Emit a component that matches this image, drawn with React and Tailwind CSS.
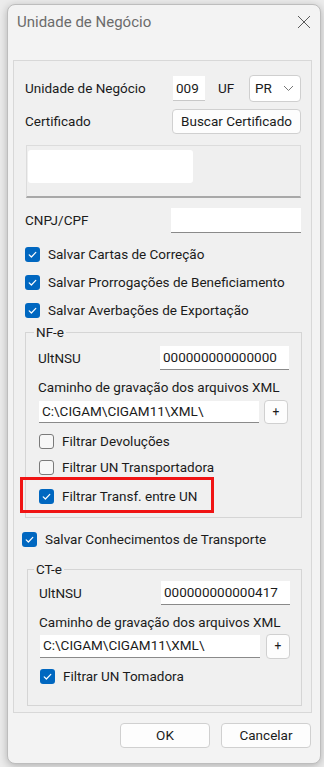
import React from 'react'

const font = { fontFamily: 'Roboto, "Liberation Sans", sans-serif' }

function Check({ checked }) {
  if (checked) {
    return (
      <span className="flex h-[15px] w-[15px] shrink-0 items-center justify-center rounded-[3px] bg-[#0067c0]">
        <svg width="11" height="11" viewBox="0 0 11 11" fill="none">
          <path d="M2.2 5.8 L4.4 8 L8.8 3.4" stroke="white" strokeWidth="1.2" strokeLinecap="round" strokeLinejoin="round" />
        </svg>
      </span>
    )
  }
  return <span className="h-[15px] w-[15px] shrink-0 rounded-[3px] border border-[#7a7a7a] bg-[#f7f7f7]" />
}

function CheckRow({ checked, label, className = '' }) {
  return (
    <div className={`flex h-[26px] items-center gap-[8px] ${className}`}>
      <Check checked={checked} />
      <span>{label}</span>
    </div>
  )
}

function TextBox({ value = '', className = '' }) {
  return (
    <div className={`flex items-center border-b border-[#8a8a8a] bg-white pl-[3px] ${className}`}>
      {value}
    </div>
  )
}

function Btn({ children, className = '' }) {
  return (
    <div className={`flex items-center justify-center rounded-[4px] border border-[#d0d0d0] bg-[#fdfdfd] ${className}`}>
      {children}
    </div>
  )
}

function Legend({ children, className = '' }) {
  return <legend className={`px-[2px] leading-[16px] ${className}`}>{children}</legend>
}

export default function App() {
  return (
    <div className="min-h-screen bg-[#ececec] pt-[4px]" style={font}>
      <div className="ml-[7px] flex h-[760px] w-[314px] flex-col rounded-[8px] border border-[#bdbdbd] bg-[#f3f3f3] text-[13.5px] text-[#1b1b1b] shadow-[0_2px_8px_rgba(0,0,0,0.25)]">
        {/* title bar */}
        <div className="flex h-[55px] items-start justify-between">
          <span className="mt-[7px] pl-[9px] text-[15px] leading-[20px] text-[#6b6b6b]">Unidade de Negócio</span>
          <svg className="mr-[9px] mt-[10px]" width="14" height="14" viewBox="0 0 14 14">
            <path d="M1 1 L13 13 M13 1 L1 13" stroke="#5a5a5a" strokeWidth="1" />
          </svg>
        </div>

        {/* main panel */}
        <div className="ml-[5px] mr-[8px] flex h-[653px] flex-col border border-[#d8d8d8] bg-[#f0f0f0] pl-[11px] pr-[10px]">
          <div className="mt-[14px] flex h-[27px] items-center">
            <span className="w-[148px]">Unidade de Negócio</span>
            <TextBox value="009" className="h-[25px] w-[32px] border-b-[#c8c8c8] pl-[1px]" />
            <span className="ml-[13px]">UF</span>
            <div className="ml-auto flex h-[27px] w-[52px] items-center justify-between rounded-[4px] border border-[#cfcfcf] bg-white pl-[5px] pr-[6px]">
              <span>PR</span>
              <svg width="11" height="7" viewBox="0 0 11 7">
                <path d="M1 1 L5.5 5.5 L10 1" stroke="#777" strokeWidth="1" fill="none" />
              </svg>
            </div>
          </div>

          <div className="mt-[7px] flex h-[25px] items-center justify-between">
            <span>Certificado</span>
            <Btn className="h-[25px] w-[129px]">Buscar Certificado</Btn>
          </div>

          <div className="ml-[1px] mt-[11px] h-[53px] w-[275px] border border-b-2 border-[#dcdcdc] border-b-[#a8a8a8] bg-[#efefef] pl-[1px] pt-[4px]">
            <div className="h-[33px] w-[165px] rounded-[3px] bg-white" />
          </div>

          <div className="mt-[10px] flex h-[25px] items-center justify-between">
            <span>CNPJ/CPF</span>
            <TextBox className="h-[25px] w-[130px]" />
          </div>

          <div className="mt-[7px] flex flex-col">
            <CheckRow checked label="Salvar Cartas de Correção" className="h-[28px]" />
            <CheckRow checked label="Salvar Prorrogações de Beneficiamento" className="h-[28px]" />
            <CheckRow checked label="Salvar Averbações de Exportação" className="h-[28px]" />
          </div>

          {/* NF-e */}
          <fieldset className="w-[277px] border border-[#d5d5d5] pb-[8px] pl-[12px] pr-[12px]">
            <Legend className="ml-[-4px]">NF-e</Legend>
            <div className="mt-[6px] flex h-[24px] items-center justify-between">
              <span>UltNSU</span>
              <TextBox value="000000000000000" className="h-[24px] w-[129px]" />
            </div>
            <div className="mt-[8px] flex h-[18px] items-center">Caminho de gravação dos arquivos XML</div>
            <div className="mt-[4px] flex h-[24px] items-center">
              <TextBox value="C:\CIGAM\CIGAM11\XML\" className="ml-[1px] h-[22px] w-[220px]" />
              <Btn className="ml-[5px] h-[24px] w-[24px] text-[12px]">+</Btn>
            </div>
            <CheckRow label="Filtrar Devoluções" className="ml-[1px] mt-[4px]" />
            <CheckRow label="Filtrar UN Transportadora" className="ml-[1px]" />
            <div className="relative mt-[3px]">
              <CheckRow checked label="Filtrar Transf. entre UN" className="ml-[1px]" />
              <div className="absolute left-[-18px] top-[-6px] h-[36px] w-[194px] border-[3px] border-[#f01414]" />
            </div>
          </fieldset>

          <CheckRow checked label="Salvar Conhecimentos de Transporte" className="ml-[-3px] mt-[8px]" />

          {/* CT-e */}
          <fieldset className="ml-[2px] mt-[9px] w-[275px] border border-[#d5d5d5] pb-[16px] pl-[11px] pr-[11px]">
            <Legend className="ml-[-5px]">CT-e</Legend>
            <div className="mt-[4px] flex h-[24px] items-center justify-between">
              <span>UltNSU</span>
              <TextBox value="000000000000417" className="h-[24px] w-[129px]" />
            </div>
            <div className="mt-[8px] flex h-[18px] items-center">Caminho de gravação dos arquivos XML</div>
            <div className="mt-[3px] flex h-[24px] items-center">
              <TextBox value="C:\CIGAM\CIGAM11\XML\" className="ml-[1px] h-[23px] w-[220px]" />
              <Btn className="ml-[6px] h-[25px] w-[24px] text-[12px]">+</Btn>
            </div>
            <CheckRow checked label="Filtrar UN Tomadora" className="ml-[1px] mt-[5px]" />
          </fieldset>
        </div>

        {/* buttons */}
        <div className="mt-[10px] flex justify-end gap-[11px] pr-[9px]">
          <Btn className="h-[25px] w-[90px] border-[#4f8fd0]">OK</Btn>
          <Btn className="h-[25px] w-[90px]">Cancelar</Btn>
        </div>
      </div>
    </div>
  )
}
